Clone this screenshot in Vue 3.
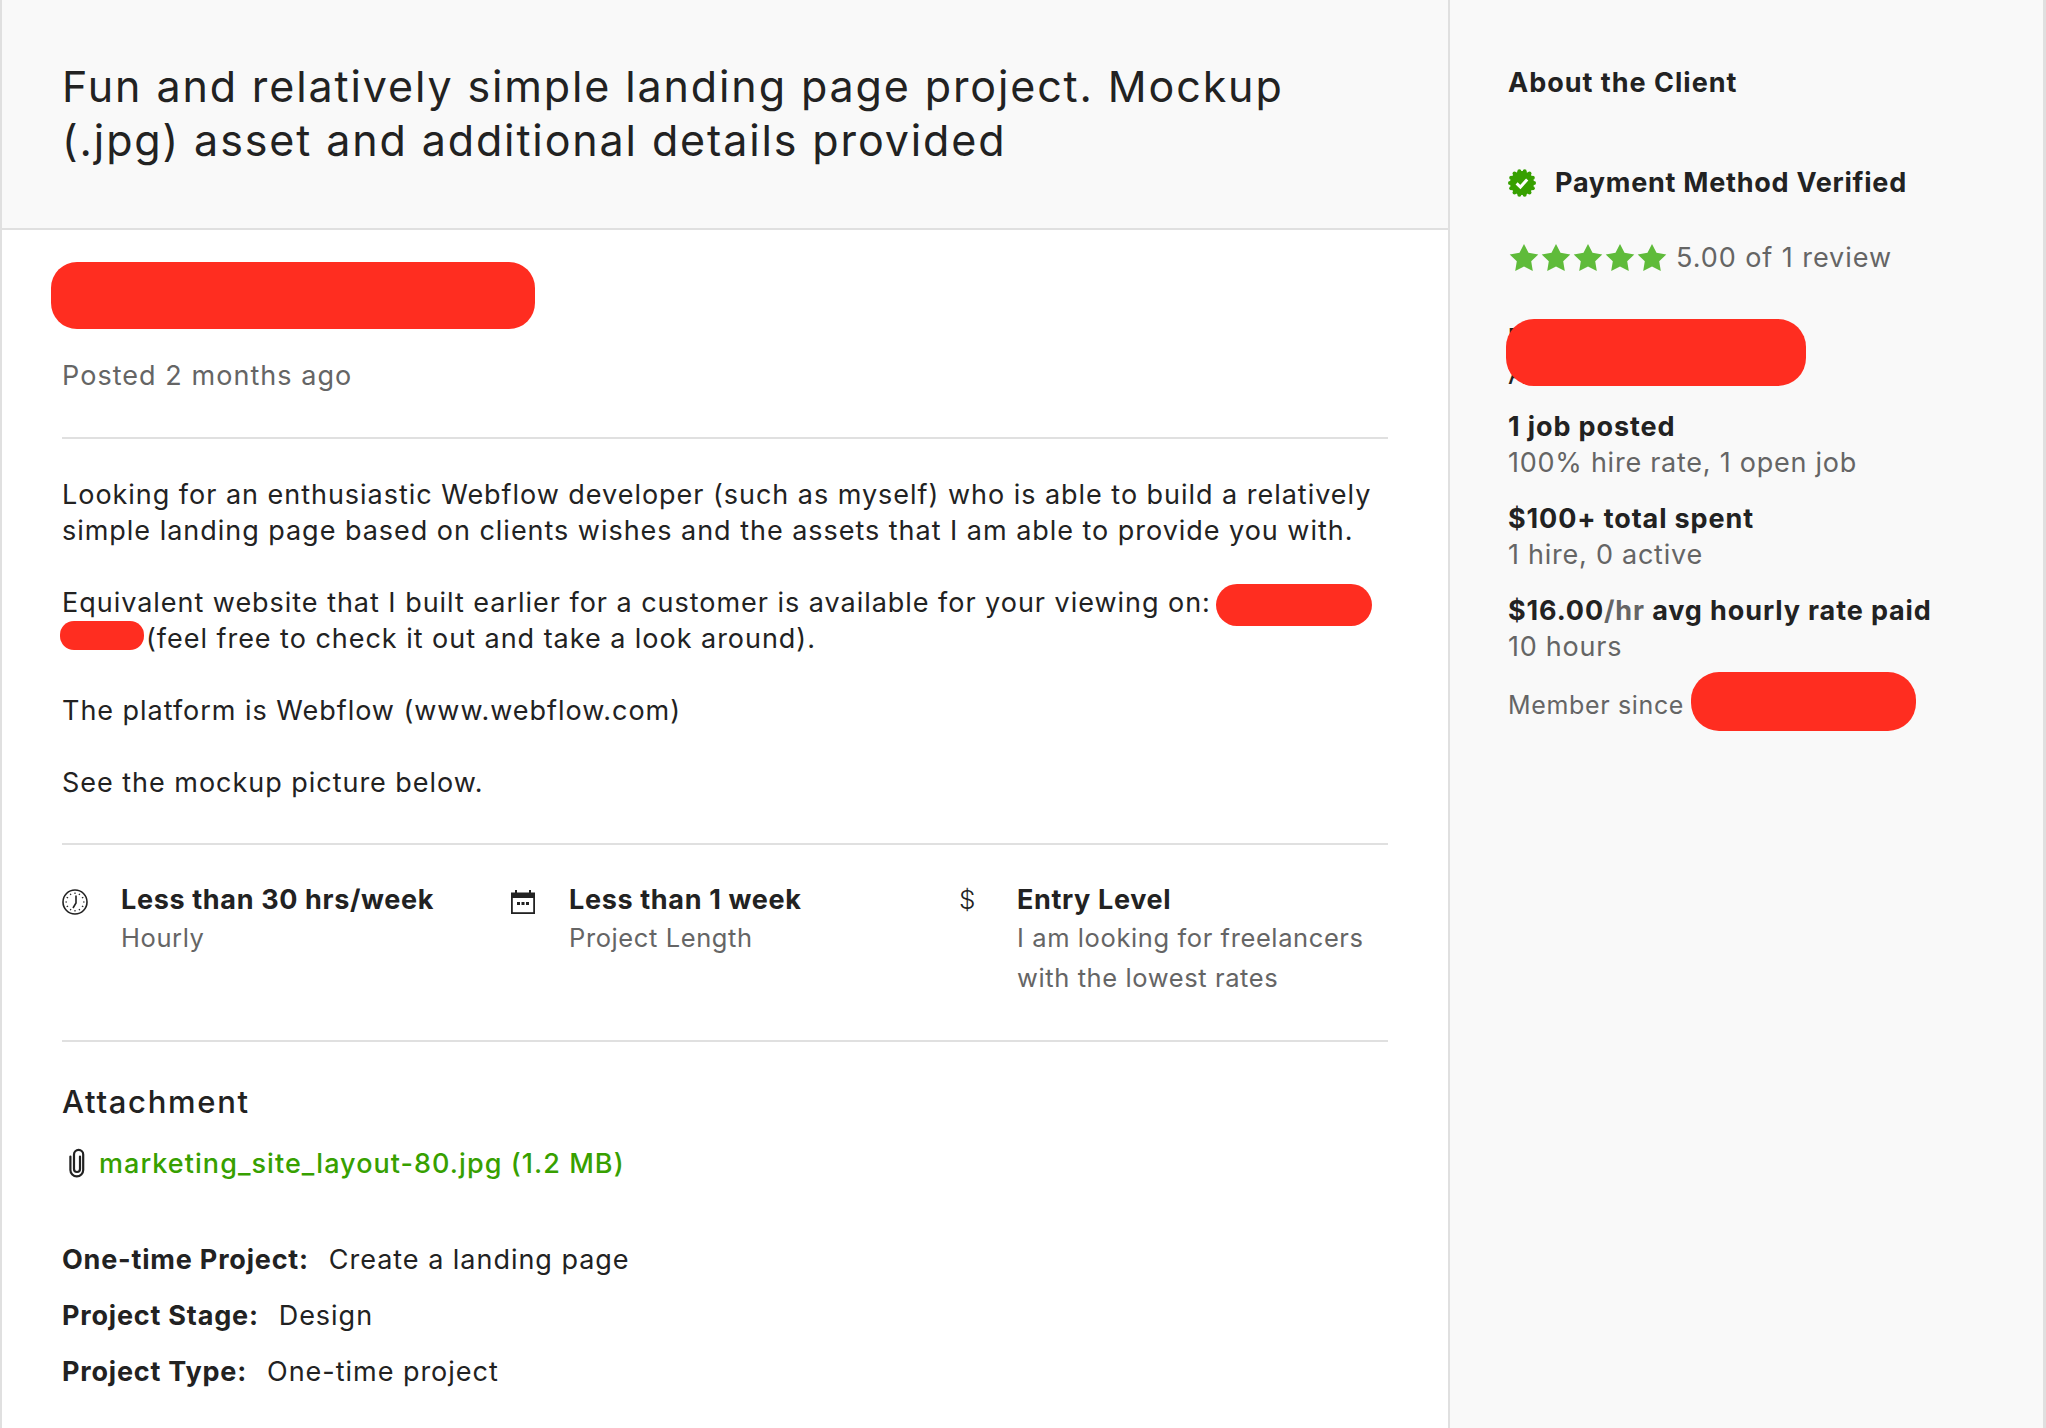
<script setup>
const facts = [
  { icon: 'clock', title: 'Less than 30 hrs/week', sub: ['Hourly'] },
  { icon: 'cal', title: 'Less than 1 week', sub: ['Project Length'] },
  { icon: 'dollar', title: 'Entry Level', sub: ['I am looking for freelancers', 'with the lowest rates'] }
]
const details = [
  ['One-time Project:', 'Create a landing page'],
  ['Project Stage:', 'Design'],
  ['Project Type:', 'One-time project']
]
const ticks = Array.from({ length: 12 }, (_, i) => i * 30)
const bumps = Array.from({ length: 14 }, (_, i) => {
  const a = (i / 14) * Math.PI * 2
  return { x: 14 + 12 * Math.cos(a), y: 14 + 12 * Math.sin(a) }
})
const stars = [0, 1, 2, 3, 4]
</script>

<template>
  <div class="page">
    <main class="main">
      <header class="head">
        <h1 class="title">Fun and relatively simple landing page project. Mockup<br />(.jpg) asset and additional details provided</h1>
      </header>
      <div class="content">
        <section class="posted">Posted 2 months ago</section>
        <section class="desc">
          <p>Looking for an enthusiastic Webflow developer (such as myself) who is able to build a relatively<br />simple landing page based on clients wishes and the assets that I am able to provide you with.</p>
          <p>Equivalent website that I built earlier for a customer is available for your viewing on:<br /><span class="gap"></span>(feel free to check it out and take a look around).</p>
          <p>The platform is Webflow (www.webflow.com)</p>
          <p>See the mockup picture below.</p>
        </section>
        <section class="facts">
          <div v-for="f in facts" :key="f.title" class="fact">
            <div class="fact-icon">
              <svg v-if="f.icon === 'clock'" width="26" height="26" viewBox="0 0 26 26">
                <circle cx="13" cy="13" r="12" fill="none" stroke="#222" stroke-width="1.6" />
                <line v-for="t in ticks" :key="t" x1="13" y1="3.4" x2="13" y2="5" stroke="#222" stroke-width="1.2" :transform="`rotate(${t} 13 13)`" />
                <path d="M14 6.5 L14 14 L11 19" fill="none" stroke="#222" stroke-width="1.6" />
              </svg>
              <svg v-else-if="f.icon === 'cal'" width="26" height="26" viewBox="0 0 26 26">
                <path d="M1 3.5h4V1h2v2.5h12V1h2v2.5h4V25H1z" fill="#222" />
                <rect x="2.8" y="9" width="20.4" height="14.2" fill="#fff" />
                <rect x="7" y="13" width="3" height="3" fill="#222" />
                <rect x="11.5" y="13" width="3" height="3" fill="#222" />
                <rect x="16" y="13" width="3" height="3" fill="#222" />
              </svg>
              <span v-else class="dollar">$</span>
            </div>
            <div class="fact-text">
              <div class="fact-title">{{ f.title }}</div>
              <div v-for="s in f.sub" :key="s" class="fact-sub">{{ s }}</div>
            </div>
          </div>
        </section>
        <section class="attach">
          <h2 class="attach-title">Attachment</h2>
          <div class="file">
            <svg class="clip" width="20" height="30" viewBox="0 0 20 30">
              <path d="M13 8.5 V21 a3 3 0 0 1 -6 0 V6.5 a4.6 4.6 0 0 1 9.2 0 V22 a6.4 6.4 0 0 1 -12.8 0 V8.5" fill="none" stroke="#222" stroke-width="2.2" stroke-linecap="round" />
            </svg>
            <span class="file-name">marketing_site_layout-80.jpg (1.2 MB)</span>
          </div>
        </section>
        <section class="details">
          <div v-for="d in details" :key="d[0]" class="detail"><b>{{ d[0] }}</b><span>{{ d[1] }}</span></div>
        </section>
      </div>
      <div class="pill pill-name"></div>
      <div class="pill pill-url"></div>
      <div class="pill pill-url2"></div>
    </main>
    <aside class="side">
      <h3 class="side-title">About the Client</h3>
      <div class="verified">
        <svg width="28" height="28" viewBox="0 0 28 28">
          <circle cx="14" cy="14" r="12" fill="#37a000" />
          <circle v-for="(b, i) in bumps" :key="i" :cx="b.x" :cy="b.y" r="2" fill="#37a000" />
          <path d="M8.6 14.4 L12.4 18 L19.2 10.4" fill="none" stroke="#fff" stroke-width="3" />
        </svg>
        <span>Payment Method Verified</span>
      </div>
      <div class="rating">
        <div class="stars">
          <svg v-for="s in stars" :key="s" width="32" height="30" viewBox="0 0 32 30">
            <polygon points="16,1 20.5,9.8 30.3,11.4 23.2,18.3 24.8,28.1 16,23.6 7.2,28.1 8.8,18.3 1.7,11.4 11.5,9.8" fill="#5fbb3a" />
          </svg>
        </div>
        <span>5.00 of 1 review</span>
      </div>
      <div class="hidden-loc"><b>N</b><span>A</span></div>
      <div class="stat"><b>1 job posted</b><span>100% hire rate, 1 open job</span></div>
      <div class="stat"><b>$100+ total spent</b><span>1 hire, 0 active</span></div>
      <div class="stat"><b>$16.00<i>/hr</i> avg hourly rate paid</b><span>10 hours</span></div>
      <div class="member">Member since</div>
      <div class="pill pill-loc"></div>
      <div class="pill pill-since"></div>
    </aside>
  </div>
</template>

<style>
html, body { margin: 0; background: #fff; }
</style>

<style scoped>
.page {
  width: 2046px;
  height: 1428px;
  overflow: hidden;
  display: flex;
  font-family: Inter, "Liberation Sans", sans-serif;
  color: #222;
  font-size: 27px;
  letter-spacing: 0.97px;
  position: relative;
}
.main {
  width: 1450px;
  box-sizing: border-box;
  border-left: 2px solid #e0e0e0;
  border-right: 2px solid #e0e0e0;
  position: relative;
  flex: none;
}
.head {
  height: 230px;
  box-sizing: border-box;
  border-bottom: 2px solid #e0e0e0;
  background: #f9f9f9;
  padding: 59px 60px 0;
}
.title {
  margin: 0;
  font-size: 43px;
  line-height: 54px;
  font-weight: 400;
  letter-spacing: 1.88px;
}
.content { padding: 0 60px; }
.posted {
  padding-top: 128px;
  height: 209px;
  box-sizing: border-box;
  line-height: 36px;
  color: #656565;
  border-bottom: 2px solid #e0e0e0;
  letter-spacing: 1.05px;
}
.desc {
  box-sizing: border-box;
  height: 406px;
  padding-top: 37.5px;
  border-bottom: 2px solid #e0e0e0;
}
.desc p { margin: 0 0 36px; line-height: 36px; }
.gap { display: inline-block; width: 84px; }
.facts {
  display: grid;
  grid-template-columns: repeat(3, 448px);
  height: 197px;
  box-sizing: border-box;
  padding-top: 36px;
  border-bottom: 2px solid #e0e0e0;
}
.fact { display: flex; }
.fact-icon { width: 59px; flex: none; padding-top: 8px; }
.dollar { display: block; margin: -2px 0 0 1px; font-size: 26px; font-weight: 300; line-height: 26px; letter-spacing: 0; }
.fact-title { font-weight: 700; line-height: 37px; letter-spacing: 0.65px; }
.fact-sub { color: #656565; line-height: 40px; font-size: 25.5px; letter-spacing: 0.6px; }
.attach-title {
  margin: 0;
  padding-top: 40px;
  font-size: 31px;
  line-height: 40px;
  font-weight: 500;
  letter-spacing: 1.7px;
}
.file { display: flex; align-items: center; margin-top: 23px; height: 36px; }
.clip { margin-left: 5px; margin-right: 12px; flex: none; }
.file-name { color: #37a000; font-weight: 500; letter-spacing: 1.05px; }
.details { padding-top: 61px; }
.detail { height: 56px; line-height: 36px; display: flex; gap: 20px; }
.detail b { font-weight: 700; letter-spacing: 0.8px; }
.side {
  flex: 1;
  box-sizing: border-box;
  background: #f9f9f9;
  border-right: 3px solid #e0e0e0;
  padding: 65px 0 0 58px;
  position: relative;
}
.side-title { margin: 0; font-size: 27px; line-height: 36px; font-weight: 700; letter-spacing: 1px; }
.verified {
  display: flex;
  align-items: center;
  gap: 19px;
  margin-top: 64px;
  font-weight: 700;
  line-height: 36px;
  letter-spacing: 0.74px;
}
.rating { display: flex; align-items: center; gap: 8px; margin-top: 39px; color: #656565; line-height: 36px; letter-spacing: 0.95px; }
.stars { display: flex; }
.hidden-loc { height: 133px; padding-top: 45px; box-sizing: border-box; }
.hidden-loc b, .hidden-loc span { display: block; line-height: 36px; }
.stat { margin-bottom: 20px; }
.stat b, .stat span { display: block; line-height: 36px; }
.stat b { font-weight: 700; letter-spacing: 0.88px; }
.stat span { color: #656565; letter-spacing: 0.75px; }
.stat i { font-style: normal; color: #656565; }
.member { color: #656565; font-size: 25px; line-height: 36px; letter-spacing: 0.65px; padding-top: 2px; }
.pill { position: absolute; background: #ff2d20; }
.pill-name { left: 49px; top: 262px; width: 484px; height: 67px; border-radius: 26px; }
.pill-url { left: 1214px; top: 584px; width: 156px; height: 42px; border-radius: 21px; }
.pill-url2 { left: 58px; top: 621px; width: 84px; height: 29px; border-radius: 14px; }
.pill-loc { left: 56px; top: 319px; width: 300px; height: 67px; border-radius: 28px; }
.pill-since { left: 241px; top: 672px; width: 225px; height: 59px; border-radius: 28px; }
</style>
